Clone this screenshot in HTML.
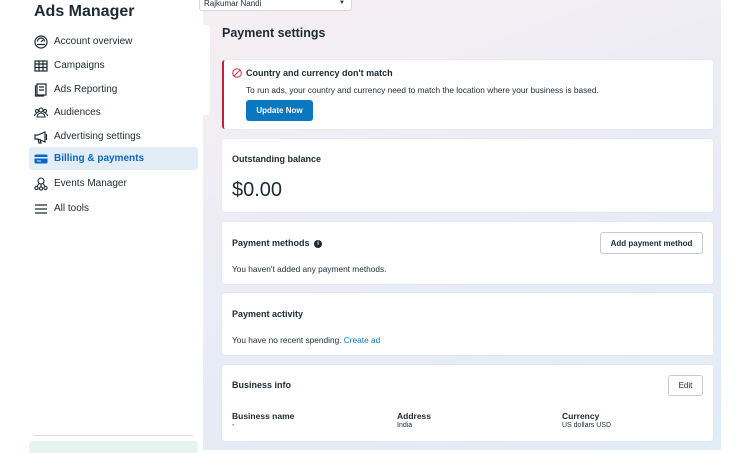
<!DOCTYPE html>
<html><head><meta charset="utf-8"><style>
*{box-sizing:border-box;margin:0;padding:0}
body{width:750px;height:450px;overflow:hidden;font-family:"Liberation Sans",sans-serif;color:#1c2b33;background:#fff;position:relative}
.side{position:absolute;left:0;top:0;width:203px;height:450px;background:#fff}
.title{position:absolute;left:34px;top:2px;font-size:16px;font-weight:bold;color:#1c2b33}
.item{position:absolute;left:29px;width:169px;height:23px;display:flex;align-items:center;padding-left:5px;font-size:10px;color:#1c2b33}
.item svg{width:14px;height:14px;margin-right:6px;flex:none}
.item.sel{background:#e3edf7;color:#0a66c2;font-weight:bold;border-radius:3px}
.main{position:absolute;left:203px;top:0;width:518px;height:450px;background:linear-gradient(160deg,#f6eff1 0%,#efedf5 30%,#e6ebf6 65%,#e2edf6 100%)}
.card{position:absolute;left:19px;width:491px;background:#fff;border-radius:3px;box-shadow:0 0 1px rgba(0,0,0,.12)}
.h{position:absolute;left:10px;font-size:9.5px;font-weight:bold}
.t{position:absolute;left:10px;font-size:8.3px}
.btn{position:absolute;border:1px solid #c6cbd0;border-radius:3px;background:#fff;font-size:8px;font-weight:bold;display:flex;align-items:center;justify-content:center}
</style></head><body>
<div class="side">
<div class="title" style="top:3px">Ads Manager</div>
<div class="item" style="top:30px"><svg viewBox="0 0 14 14" fill="none" stroke="#1c2b33" stroke-width="1.2"><circle cx="7" cy="7" r="6"/><path d="M3.5 6.5a3.5 3.5 0 0 1 7 0M7 7l2-2M3 9.5h8"/></svg>Account overview</div>
<div class="item" style="top:54px"><svg viewBox="0 0 14 14" fill="none" stroke="#1c2b33" stroke-width="1.2"><rect x="1" y="2" width="12" height="10"/><path d="M1 5h12M1 8.5h12M5 2v10M9 2v10"/></svg>Campaigns</div>
<div class="item" style="top:78px"><svg viewBox="0 0 14 14" fill="none" stroke="#1c2b33" stroke-width="1.2"><rect x="3" y="1" width="9" height="11"/><path d="M3 3H1.5v10H10M5 4h5M5 7h5"/></svg>Ads Reporting</div>
<div class="item" style="top:101px"><svg viewBox="0 0 14 14" fill="none" stroke="#1c2b33" stroke-width="1.1"><circle cx="7" cy="4" r="2"/><circle cx="3" cy="5" r="1.5"/><circle cx="11" cy="5" r="1.5"/><path d="M3 11a4 4 0 0 1 8 0zM0.5 10a2.5 2.5 0 0 1 2.5-2.5M13.5 10a2.5 2.5 0 0 0-2.5-2.5"/></svg>Audiences</div>
<div class="item" style="top:125px"><svg viewBox="0 0 14 14" fill="none" stroke="#1c2b33" stroke-width="1.2"><path d="M1 5h3l7-3v10L4 9H1zM4 9l1 4h2l-1-4M12.5 4v6"/></svg>Advertising settings</div>
<div class="item sel" style="top:147px"><svg viewBox="0 0 14 14"><rect x="0.5" y="2.5" width="13" height="9" rx="1.5" fill="#0a66c2"/><rect x="0.5" y="5" width="13" height="1.5" fill="#e3edf7"/><rect x="3" y="8.5" width="4" height="1" fill="#e3edf7"/></svg>Billing &amp; payments</div>
<div class="item" style="top:172px"><svg viewBox="0 0 14 14" fill="none" stroke="#1c2b33" stroke-width="1.1"><circle cx="7" cy="4" r="3"/><circle cx="2.5" cy="11" r="1.6"/><circle cx="7" cy="11.5" r="1.6"/><circle cx="11.5" cy="11" r="1.6"/><path d="M5 6.5 3 9.5M7 7v3M9 6.5l2 3"/></svg>Events Manager</div>
<div class="item" style="top:197px"><svg viewBox="0 0 14 14" fill="none" stroke="#1c2b33" stroke-width="1.2"><path d="M1 3h12M1 7h12M1 11h12"/></svg>All tools</div>
<div style="position:absolute;left:34px;top:435px;width:159px;height:1px;background:#dcdde3"></div>
<div style="position:absolute;left:29px;top:441px;width:169px;height:12px;background:#e6f4ef;border-radius:3px"></div>
</div>
<div class="main">
<div style="position:absolute;left:0;top:25px;width:7px;height:90px;background:#fff;border-radius:0 3px 3px 0"></div>
<div style="position:absolute;left:-4px;top:-6px;width:153px;height:17px;background:#fff;border:1px solid #d5d8dc;border-radius:3px;font-size:8px;padding:4px 0 0 4px;color:#1c2b33">Rajkumar Nandi<span style="position:absolute;right:6px;top:5px;font-size:6px">▼</span></div>
<div style="position:absolute;left:19px;top:26px;font-size:12.5px;font-weight:bold">Payment settings</div>
<div class="card" style="top:60px;height:69px;border-left:2px solid #c91f2d">
<svg style="position:absolute;left:8px;top:8px" width="10" height="10" viewBox="0 0 10 10" fill="none" stroke="#d0313f" stroke-width="1"><circle cx="5" cy="5" r="4.3"/><path d="M2 8 8 2"/></svg>
<div class="h" style="left:22px;top:8px;font-size:9px">Country and currency don't match</div>
<div class="t" style="left:22px;top:25px">To run ads, your country and currency need to match the location where your business is based.</div>
<div style="position:absolute;left:22px;top:40px;width:67px;height:21px;background:#0a78be;border-radius:3px;color:#fff;font-size:8px;font-weight:bold;display:flex;align-items:center;justify-content:center">Update Now</div>
</div>
<div class="card" style="top:139px;height:73px">
<div class="h" style="top:15px;font-size:9px">Outstanding balance</div>
<div style="position:absolute;left:10px;top:40px;font-size:20px">$0.00</div>
</div>
<div class="card" style="top:222px;height:62px">
<div class="h" style="top:16px;font-size:9px">Payment methods <span style="display:inline-block;width:8px;height:8px;border-radius:50%;background:#1c2b33;color:#fff;font-size:6px;text-align:center;line-height:8px;vertical-align:1px;margin-left:2px">i</span></div>
<div class="t" style="top:42px">You haven't added any payment methods.</div>
<div class="btn" style="left:378px;top:10px;width:103px;height:22px">Add payment method</div>
</div>
<div class="card" style="top:293px;height:62px">
<div class="h" style="top:16px;font-size:9px">Payment activity</div>
<div class="t" style="top:42px">You have no recent spending. <span style="color:#0a78be">Create ad</span></div>
</div>
<div class="card" style="top:365px;height:76px">
<div class="h" style="top:15px;font-size:9px">Business info</div>
<div class="btn" style="left:446px;top:10px;width:35px;height:21px;font-weight:normal">Edit</div>
<div class="h" style="top:46px;font-size:8.5px">Business name</div><div class="t" style="top:57px;font-size:7px">-</div>
<div class="h" style="left:175px;top:46px;font-size:8.5px">Address</div><div class="t" style="left:175px;top:57px;font-size:7px">India</div>
<div class="h" style="left:340px;top:46px;font-size:8.5px">Currency</div><div class="t" style="left:340px;top:57px;font-size:7px">US dollars USD</div>
</div>
</div>
</body></html>
